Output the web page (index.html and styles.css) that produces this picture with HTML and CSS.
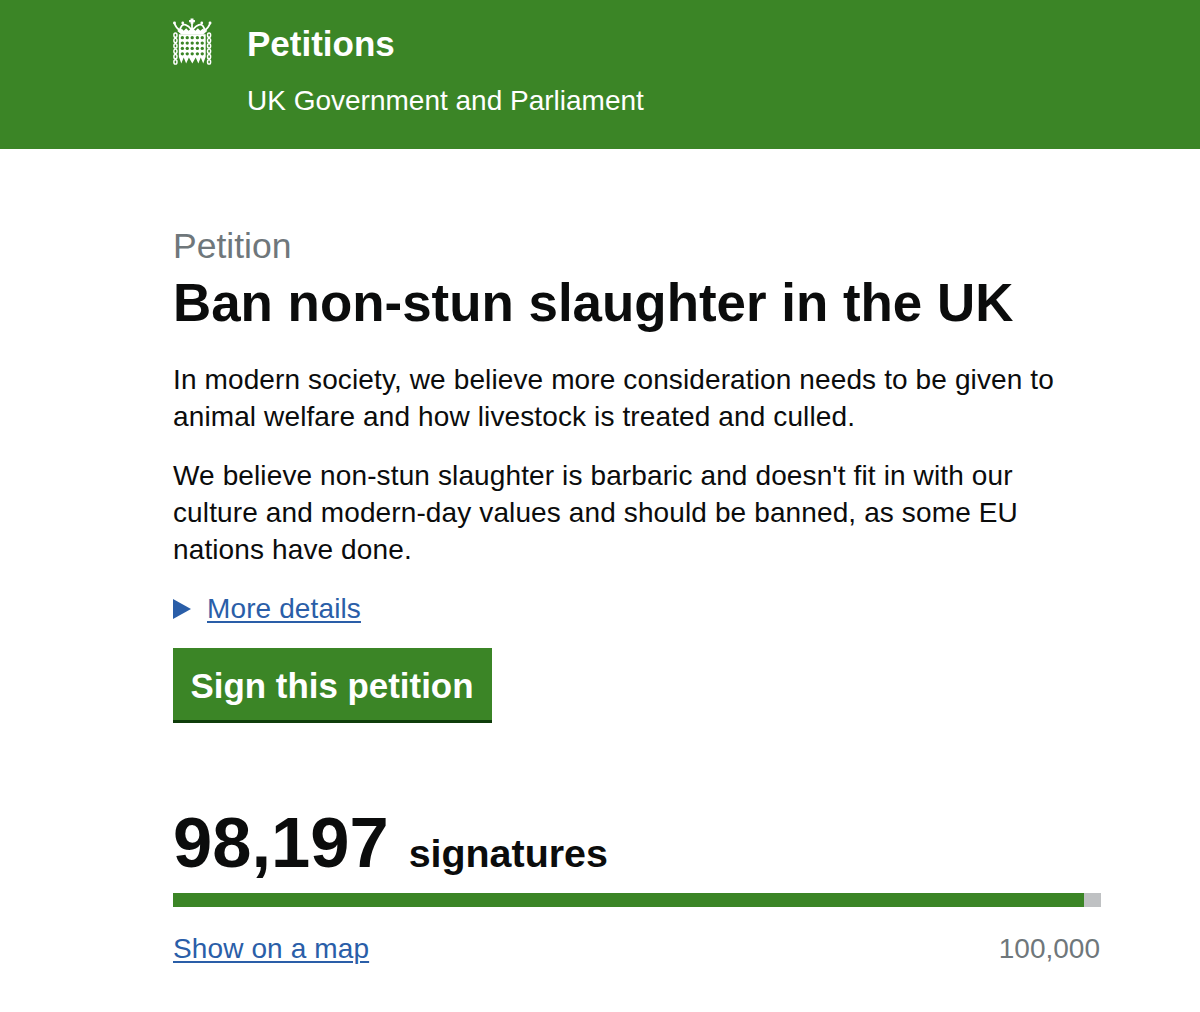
FILE: index.html
```html
<!DOCTYPE html>
<html lang="en">
<head>
<meta charset="utf-8">
<title>Ban non-stun slaughter in the UK - Petitions</title>
<link rel="stylesheet" href="styles.css">
</head>
<body>
<header class="site-header">
  <svg class="crest" viewBox="0 0 40 48" aria-hidden="true">
    <g fill="none" stroke="#fff" stroke-width="1.8">
      <path d="M1.5 5 C3 9 5 11 7.5 12.5 C7 8 10 5.5 13 6.5 C16 7.5 17.5 9.5 19.5 12"/>
      <path d="M38 5 C36.5 9 34.5 11 32 12.5 C32.5 8 29.5 5.5 26.5 6.5 C23.5 7.5 22 9.5 19.5 12"/>
      <path d="M19.5 3 V12"/>
      <path d="M5 12 L9 15.5 H30.5 L34.5 12"/>
    </g>
    <g fill="#fff">
      <path d="M18 0 h3 v1.5 h1.5 v2.2 h-1.5 v1.5 h-3 v-1.5 h-1.5 v-2.2 h1.5 z"/>
      <circle cx="1.5" cy="4.5" r="1.5"/><circle cx="38" cy="4.5" r="1.5"/>
      <circle cx="10" cy="4.5" r="1.4"/><circle cx="29.5" cy="4.5" r="1.4"/>
      <path d="M7 12.5 L9 10.5 L11 12.5 L13.5 10 L16 12.5 L19.5 9.5 L23 12.5 L25.5 10 L28 12.5 L30.5 10.5 L32.5 12.5 V15 H7 Z"/>
      <path d="M6 16 H33.5 V39 L31 46 L28.5 40 L26 46 L23.3 40 L19.8 46 L16.3 40 L13.5 46 L11 40 L8.5 46 L6 39 Z"/>
    </g>
    <g fill="#3b8526">
      <circle cx="9.6" cy="19.6" r="1.7"/><circle cx="14.6" cy="19.6" r="1.7"/><circle cx="19.7" cy="19.6" r="1.7"/><circle cx="25" cy="19.6" r="1.7"/><circle cx="30" cy="19.6" r="1.7"/>
      <circle cx="9.6" cy="25.1" r="1.7"/><circle cx="14.6" cy="25.1" r="1.7"/><circle cx="19.7" cy="25.1" r="1.7"/><circle cx="25" cy="25.1" r="1.7"/><circle cx="30" cy="25.1" r="1.7"/>
      <circle cx="9.6" cy="30.6" r="1.7"/><circle cx="14.6" cy="30.6" r="1.7"/><circle cx="19.7" cy="30.6" r="1.7"/><circle cx="25" cy="30.6" r="1.7"/><circle cx="30" cy="30.6" r="1.7"/>
      <circle cx="9.6" cy="36.1" r="1.7"/><circle cx="14.6" cy="36.1" r="1.7"/><circle cx="19.7" cy="36.1" r="1.7"/><circle cx="25" cy="36.1" r="1.7"/><circle cx="30" cy="36.1" r="1.7"/>
    </g>
    <g fill="none" stroke="#fff" stroke-width="1.5">
      <ellipse cx="2.5" cy="17" rx="1.6" ry="2.2"/><ellipse cx="2.5" cy="22.5" rx="1.6" ry="2.2"/><ellipse cx="2.5" cy="28" rx="1.6" ry="2.2"/><ellipse cx="2.5" cy="33.5" rx="1.6" ry="2.2"/><ellipse cx="2.5" cy="39" rx="1.6" ry="2.2"/><ellipse cx="2.5" cy="44.5" rx="1.6" ry="2.2"/>
      <ellipse cx="37" cy="17" rx="1.6" ry="2.2"/><ellipse cx="37" cy="22.5" rx="1.6" ry="2.2"/><ellipse cx="37" cy="28" rx="1.6" ry="2.2"/><ellipse cx="37" cy="33.5" rx="1.6" ry="2.2"/><ellipse cx="37" cy="39" rx="1.6" ry="2.2"/><ellipse cx="37" cy="44.5" rx="1.6" ry="2.2"/>
    </g>
  </svg>
  <div class="brand">
    <div class="brand-title">Petitions</div>
    <div class="brand-sub">UK Government and Parliament</div>
  </div>
</header>
<main class="content">
  <p class="eyebrow">Petition</p>
  <h1 class="headline">Ban non-stun slaughter in the UK</h1>
  <p class="para">In modern society, we believe more consideration needs to be given to<br>animal welfare and how livestock is treated and culled.</p>
  <p class="para">We believe non-stun slaughter is barbaric and doesn't fit in with our<br>culture and modern-day values and should be banned, as some EU<br>nations have done.</p>
  <div class="details">
    <span class="arrow"></span>
    <a class="link" href="#">More details</a>
  </div>
  <a class="button" href="#">Sign this petition</a>
  <div class="count"><span class="count-num">98,197</span> <span class="count-label">signatures</span></div>
  <div class="bar"><div class="bar-fill" style="width:98.197%"></div></div>
  <div class="foot">
    <a class="link" href="#">Show on a map</a>
    <span class="goal">100,000</span>
  </div>
</main>
</body>
</html>
```
FILE: styles.css
```css
* { box-sizing: border-box; }
html, body { margin: 0; padding: 0; background: #fff; }
body { font-family: "Liberation Sans", Arial, sans-serif; color: #0b0c0c; height: 1012px; overflow: hidden; }
.site-header { background: #3b8526; height: 149px; padding: 18px 0 0 173px; display: flex; color: #fff; }
.crest { width: 39px; height: 48px; flex: none; }
.brand { margin-left: 35px; }
.brand-title { font-size: 35px; font-weight: 700; line-height: 40px; margin-top: 6px; }
.brand-sub { font-size: 28px; line-height: 32px; margin-top: 21px; }
.content { padding: 0 99px 0 173px; }
.eyebrow { margin: 76px 0 0; font-size: 35.5px; line-height: 42px; color: #6f777b; }
.headline { margin: 6px 0 0; font-size: 52.9px; line-height: 60px; font-weight: 700; }
.para { margin: 0; font-size: 28px; line-height: 37px; letter-spacing: 0.12px; }
.headline + .para { margin-top: 28px; }
.para + .para { margin-top: 22px; }
.details { display: flex; align-items: center; margin-top: 22px; height: 37px; }
.arrow { width: 0; height: 0; border-left: 18px solid #2a5ea8; border-top: 10px solid transparent; border-bottom: 10px solid transparent; margin-right: 16px; }
.link { color: #2a5ea8; font-size: 28px; letter-spacing: 0.12px; text-decoration: underline; text-decoration-thickness: 2px; text-underline-offset: 3px; }
.button { display: inline-block; margin-top: 21px; background: #3b8526; color: #fff; font-size: 34.9px; font-weight: 700; line-height: 76px; height: 75px; padding: 0 18.5px 0 17.5px; border-bottom: 3px solid #0f3d0a; text-decoration: none; }
.count { margin-top: 85px; height: 69px; display: flex; align-items: baseline; gap: 20px; }
.count-num { font-size: 70.5px; font-weight: 700; line-height: 70px; }
.count-label { font-size: 39.4px; font-weight: 700; }
.bar { margin-top: 16px; height: 14px; background: #bfc1c3; }
.bar-fill { height: 100%; background: #3b8526; }
.foot { display: flex; justify-content: space-between; margin-top: 23px; font-size: 28px; line-height: 37px; }
.goal { color: #6f777b; margin-right: 1px; }
```
